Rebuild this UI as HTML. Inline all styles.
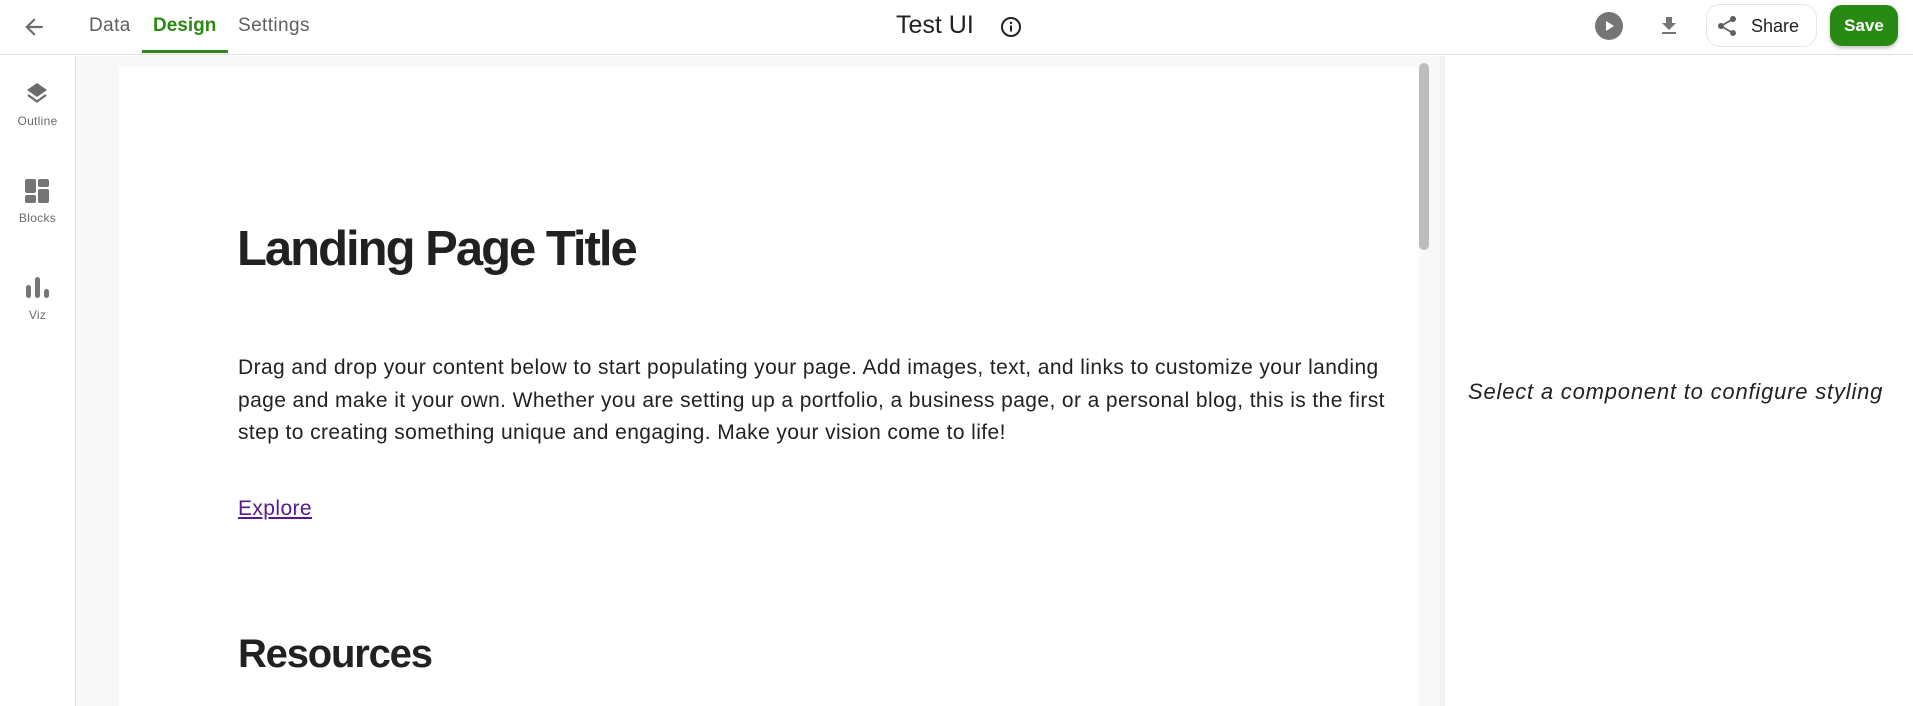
<!DOCTYPE html>
<html><head><meta charset="utf-8"><style>
*{margin:0;padding:0;box-sizing:border-box}
body{width:1913px;height:706px;overflow:hidden;background:#fff;font-family:"Liberation Sans",sans-serif;position:relative;color:#212121}
.abs{position:absolute}
.hdr{left:0;top:0;width:1913px;height:55px;border-bottom:1px solid #e0e0e0;background:#fff}
.tab{top:15px;font-size:19px;color:#5f5f5f;white-space:nowrap;letter-spacing:0.4px}
.side{left:0;top:56px;width:76px;height:650px;border-right:1px solid #e0e0e0;background:#fff}
.slabel{width:75px;text-align:center;font-size:12px;color:#6b6b6b;letter-spacing:.3px}
.p{left:238px;font-size:21px;color:#222;white-space:nowrap;letter-spacing:0.4px}
</style></head><body>
<div class="abs hdr"></div>
<svg class="abs" style="left:21px;top:14px" width="26" height="26" viewBox="0 0 24 24"><path d="M20 11H7.83l5.59-5.59L12 4l-8 8 8 8 1.41-1.41L7.83 13H20v-2z" fill="#6b6b6b"/></svg>
<div class="abs tab" style="left:89px">Data</div>
<div class="abs tab" style="left:153px;color:#2a8a12;font-weight:bold;letter-spacing:0">Design</div>
<div class="abs" style="left:142px;top:50px;width:86px;height:3px;background:#2a8a12"></div>
<div class="abs tab" style="left:238px">Settings</div>
<div class="abs" style="left:896px;top:11px;font-size:25px;color:#222">Test UI</div>
<svg class="abs" style="left:999px;top:15px" width="24" height="24" viewBox="0 0 24 24"><circle cx="12" cy="12" r="9" fill="none" stroke="#222" stroke-width="2"/><rect x="11" y="10.5" width="2" height="6" fill="#222"/><circle cx="12" cy="8" r="1.2" fill="#222"/></svg>
<svg class="abs" style="left:1595px;top:12px" width="28" height="28" viewBox="0 0 28 28"><circle cx="14" cy="14" r="14" fill="#757575"/><path d="M11 9l8 5-8 5z" fill="#fff"/></svg>
<svg class="abs" style="left:1657px;top:14px" width="24" height="24" viewBox="0 0 24 24"><path d="M19 9h-4V3H9v6H5l7 7 7-7zM5 18v2h14v-2H5z" fill="#757575"/></svg>
<div class="abs" style="left:1706px;top:4px;width:111px;height:43px;border:1px solid #e6e6e6;border-radius:14px;background:#fff"></div>
<svg class="abs" style="left:1715px;top:14px" width="24" height="24" viewBox="0 0 24 24"><path d="M18 16.08c-.76 0-1.44.3-1.96.77L8.91 12.7c.05-.23.09-.46.09-.7s-.04-.47-.09-.7l7.05-4.11c.54.5 1.25.81 2.04.81 1.66 0 3-1.34 3-3s-1.34-3-3-3-3 1.34-3 3c0 .24.04.47.09.7L8.04 9.81C7.5 9.31 6.79 9 6 9c-1.66 0-3 1.34-3 3s1.34 3 3 3c.79 0 1.5-.31 2.04-.81l7.12 4.16c-.05.21-.08.43-.08.65 0 1.61 1.31 2.92 2.92 2.92s2.92-1.31 2.92-2.92-1.31-2.92-2.92-2.92z" fill="#5f5f5f"/></svg>
<div class="abs" style="left:1751px;top:16px;font-size:18px;color:#222">Share</div>
<div class="abs" style="left:1830px;top:5px;width:68px;height:41px;background:#298a13;border-radius:12px;box-shadow:0 2px 4px rgba(0,0,0,.25);color:#fff;font-weight:bold;font-size:17px;text-align:center;line-height:41px">Save</div>

<div class="abs side"></div>
<svg class="abs" style="left:25px;top:81px" width="24" height="26" viewBox="0 0 24 26"><path d="M12 2L2 9l10 7 10-7z" fill="#6b6b6b"/><path d="M3 14l9 6.5 9-6.5" fill="none" stroke="#6b6b6b" stroke-width="2.2"/></svg>
<div class="abs slabel" style="top:114px">Outline</div>
<svg class="abs" style="left:25px;top:179px" width="25" height="25" viewBox="0 0 25 25"><rect x="0" y="0" width="11" height="14" rx="2" fill="#757575"/><rect x="13" y="0" width="11" height="8" rx="2" fill="#757575"/><rect x="0" y="16" width="11" height="8" rx="2" fill="#757575"/><rect x="13" y="10" width="11" height="14" rx="2" fill="#757575"/></svg>
<div class="abs slabel" style="top:211px">Blocks</div>
<svg class="abs" style="left:26px;top:277px" width="24" height="21" viewBox="0 0 24 21"><rect x="0" y="8" width="5" height="13" rx="2.5" fill="#757575"/><rect x="9" y="0" width="5" height="21" rx="2.5" fill="#757575"/><rect x="18" y="12" width="5" height="9" rx="2.5" fill="#757575"/></svg>
<div class="abs slabel" style="top:308px">Viz</div>

<div class="abs" style="left:76px;top:56px;width:1369px;height:650px;background:#f8f8f8"></div>
<div class="abs" style="left:119px;top:67px;width:1300px;height:639px;background:#fff"></div>
<div class="abs" style="left:1440px;top:56px;width:5px;height:650px;background:#f2f2f2"></div>
<div class="abs" style="left:1419px;top:63px;width:10px;height:187px;background:#bdbdbd;border-radius:5px"></div>

<div class="abs" style="left:237px;top:220px;font-size:49px;font-weight:bold;color:#212121;letter-spacing:-2.0px;white-space:nowrap;line-height:58px">Landing Page Title</div>
<div class="abs p" style="top:356px">Drag and drop your content below to start populating your page. Add images, text, and links to customize your landing</div>
<div class="abs p" style="top:389px">page and make it your own. Whether you are setting up a portfolio, a business page, or a personal blog, this is the first</div>
<div class="abs p" style="top:421px">step to creating something unique and engaging. Make your vision come to life!</div>
<div class="abs p" style="top:497px;color:#551a8b;text-decoration:underline">Explore</div>
<div class="abs" style="left:238px;top:632px;font-size:40px;font-weight:bold;color:#212121;letter-spacing:-1.2px;white-space:nowrap">Resources</div>

<div class="abs" style="left:1468px;top:379px;font-size:22px;font-style:italic;color:#222;white-space:nowrap;letter-spacing:0.8px">Select a component to configure styling</div>
</body></html>
